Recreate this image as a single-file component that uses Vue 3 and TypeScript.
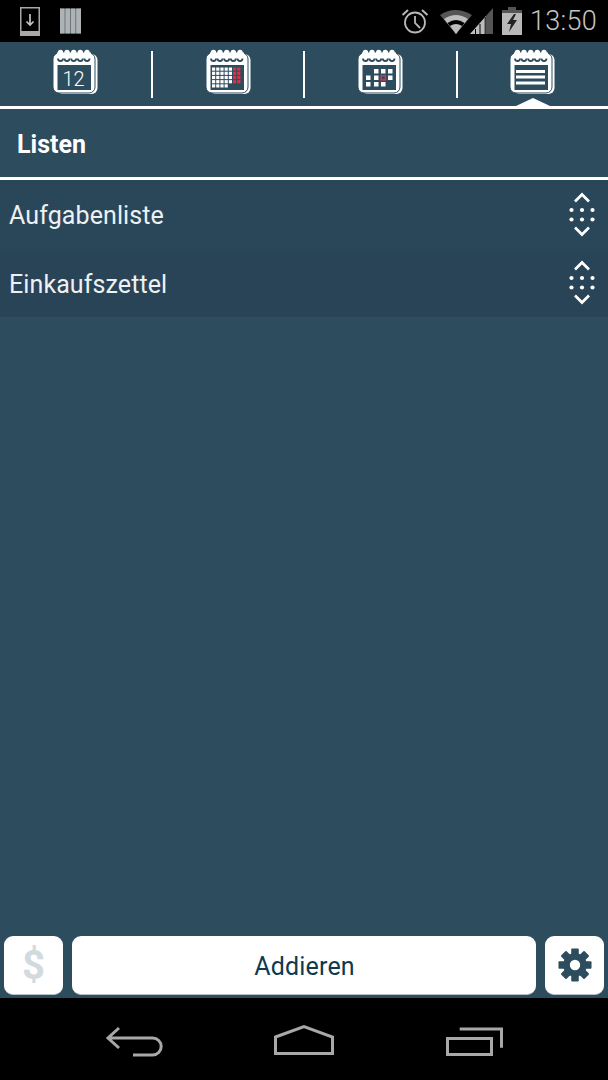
<script setup lang="ts">
// tab icons share the calendar body, only the inner content differs
const tabs = [
  { id: 'day' },
  { id: 'month' },
  { id: 'week' },
  { id: 'list' },
];
const bumps = [7.5, 14, 20.7, 27.3, 34];

// month view grid, last two columns are the red weekend
const monthCells: { x: number; y: number; red: boolean }[] = [];
for (let r = 0; r < 5; r++) {
  for (let c = 0; c < 7; c++) {
    if (r === 4 && c > 3) continue;
    monthCells.push({ x: 6 + c * 4.2, y: 18.5 + r * 4.2, red: c > 4 && r < 4 });
  }
}

// week view squares
const weekCells = [
  [16, 20], [23, 20], [30, 20],
  [8, 26.5], [16, 26.5], [30, 26.5],
  [8, 33], [16, 33], [23, 33],
];

const teeth = [0, 45, 90, 135, 180, 225, 270, 315];

const lists = ['Aufgabenliste', 'Einkaufszettel'];
</script>

<template>
  <div class="screen">
    <header class="status">
      <div class="status-left">
        <svg width="20" height="29" viewBox="0 0 20 29">
          <path d="M.75.75h18.500v27.500H.75z" fill="#000" stroke="#a8a8a8" stroke-width="1.500" />
          <rect x="0" y="24" width="20" height="5" fill="#a8a8a8" />
          <path d="M10 7v11M6.500 14.500l3.500 3.500 3.500-3.500" fill="none" stroke="#c4c4c4" stroke-width="1.700" />
        </svg>
        <svg class="books" width="21" height="26" viewBox="0 0 21 26">
          <rect width="21" height="25" y="0.500" fill="#59666b" />
          <rect x="0" y="0.500" width="4.600" height="25" fill="#aeb4b6" />
          <rect x="5.400" y="0.500" width="4.600" height="25" fill="#aeb4b6" />
          <rect x="10.800" y="0.500" width="4.600" height="25" fill="#aeb4b6" />
          <rect x="16.200" y="0.500" width="4.800" height="25" fill="#aeb4b6" />
        </svg>
      </div>
      <div class="status-right">
        <svg class="alarm" width="28" height="26" viewBox="0 0 28 26">
          <circle cx="14" cy="14.500" r="10" fill="none" stroke="#b8b8b8" stroke-width="1.800" />
          <path d="M14 8v7l5 5" fill="none" stroke="#b8b8b8" stroke-width="1.800" />
          <path d="M1.500 7 7 2M26.500 7 21 2" fill="none" stroke="#b8b8b8" stroke-width="2" />
        </svg>
        <svg class="wifi" width="54" height="27" viewBox="0 0 54 27">
          <path d="M0 7Q15-3 32 7L16 26Z" fill="#555" />
          <path d="M4 11Q16 3 28 11L16 26Z" fill="#bdbdbd" />
          <path d="M7.500 15Q16 9 24.500 15L16 26Z" fill="#000" />
          <path d="M10 18Q16 14 22 18L16 26Z" fill="#bdbdbd" />
          <path d="M53 0V26H30Z" fill="#555" />
          <path d="M46 8V26H30L40 15Z" fill="#bdbdbd" />
          <path d="M35.500 21V26M40 16V26M45.200 9V26" stroke="#000" stroke-width="1" />
        </svg>
        <svg class="battery" width="20" height="28" viewBox="0 0 20 28">
          <rect x="6" y="0" width="8" height="3" fill="#555" />
          <rect x="0" y="3" width="20" height="25" fill="#b8b8b8" />
          <rect x="0" y="3" width="20" height="3" fill="#555" />
          <path d="M12 7 5 17h4l-2 8 8-12h-4l3-6z" fill="#222" />
        </svg>
        <span class="clock">13:50</span>
      </div>
    </header>

    <nav class="tabs">
      <div v-for="(tab, i) in tabs" :key="tab.id" class="tab" :class="{ divided: i < 3 }">
        <svg width="46" height="46" viewBox="0 0 46 46">
          <rect x="3.500" y="5" width="41" height="40" rx="6" fill="#fff" />
          <rect x="0" y="4" width="42" height="40" rx="6" fill="#fff" stroke="#2d4c5e" stroke-width="1" />
          <rect x="4" y="3.500" width="34" height="3" fill="#fff" />
          <circle v-for="b in bumps" :key="b" :cx="b" cy="3.500" r="2.700" fill="#fff" />
          <path
            v-for="b in bumps"
            :key="'u' + b"
            :d="`M${b - 2.5} 9.500a2.500 2.500 0 0 0 5 0`"
            fill="none"
            stroke="#2d4c5e"
            stroke-width="1.800"
          />
          <rect x="4.500" y="16" width="33.500" height="25" fill="#2d4c5e" />
          <text v-if="tab.id === 'day'" x="20.500" y="37" class="day-num">12</text>
          <template v-if="tab.id === 'month'">
            <rect
              v-for="(c, n) in monthCells"
              :key="n"
              :x="c.x"
              :y="c.y"
              width="3.200"
              height="3.200"
              :fill="c.red ? '#d8324a' : '#fff'"
            />
          </template>
          <template v-if="tab.id === 'week'">
            <rect v-for="(c, n) in weekCells" :key="n" :x="c[0]" :y="c[1]" width="4.500" height="4.500" fill="#fff" />
            <rect x="23.200" y="26.700" width="4.200" height="4.200" fill="#2d4c5e" stroke="#e0304a" stroke-width="1.500" />
          </template>
          <template v-if="tab.id === 'list'">
            <rect x="6" y="21" width="29" height="3" fill="#fff" />
            <rect x="6" y="26.500" width="29" height="3" fill="#fff" />
            <rect x="6" y="32.500" width="29" height="3" fill="#fff" />
          </template>
        </svg>
        <span v-if="tab.id === 'list'" class="pointer" />
      </div>
    </nav>

    <h1 class="title">Listen</h1>

    <ul class="rows">
      <li v-for="name in lists" :key="name" class="row">
        <span class="row-name">{{ name }}</span>
        <svg width="26" height="46" viewBox="0 0 26 46">
          <path d="M6 9.500 13 2.500l7 7M6 35.500l7 7 7-7" fill="none" stroke="#fff" stroke-width="2.700" />
          <g fill="#fff">
            <circle cx="2.500" cy="18" r="2.100" />
            <circle cx="13" cy="18" r="2.100" />
            <circle cx="23.500" cy="18" r="2.100" />
            <circle cx="2.500" cy="27.500" r="2.100" />
            <circle cx="13" cy="27.500" r="2.100" />
            <circle cx="23.500" cy="27.500" r="2.100" />
          </g>
        </svg>
      </li>
    </ul>

    <footer class="actions">
      <button class="btn square dollar">$</button>
      <button class="btn add">Addieren</button>
      <button class="btn square">
        <svg width="34" height="34" viewBox="0 0 36 36">
          <rect
            v-for="t in teeth"
            :key="t"
            x="14"
            y="0.500"
            width="8"
            height="8"
            rx="1"
            fill="#2d4c5e"
            :transform="`rotate(${t} 18 18)`"
          />
          <circle cx="18" cy="18" r="9" fill="none" stroke="#2d4c5e" stroke-width="7" />
        </svg>
      </button>
    </footer>

    <div class="navbar">
      <svg width="60" height="34" viewBox="0 0 60 34">
        <path d="M13 4 2 14l11 10M2 14h44.700a8.500 8.500 0 0 1 0 17H27" fill="none" stroke="#a8a8a8" stroke-width="3" />
      </svg>
      <svg class="home" width="60" height="34" viewBox="0 0 60 34">
        <path d="M1.500 13 30 2.500 58.500 13v16.500H1.500z" fill="none" stroke="#a8a8a8" stroke-width="3" />
      </svg>
      <svg class="recents" width="60" height="34" viewBox="0 0 60 34">
        <path d="M3.500 14.500h44v16h-44z" fill="none" stroke="#a8a8a8" stroke-width="3" />
        <path d="M15.700 5h41.800v18.700" fill="none" stroke="#a8a8a8" stroke-width="3" />
      </svg>
    </div>
  </div>
</template>

<style scoped>
.screen {
  width: 608px;
  height: 1080px;
  display: flex;
  flex-direction: column;
  background: #2d4c5e;
  font-family: Roboto, "Liberation Sans", sans-serif;
  overflow: hidden;
}
.status {
  height: 42px;
  flex: none;
  background: #000;
  display: flex;
  align-items: center;
  justify-content: space-between;
  padding: 0 11px 0 20px;
}
.status-left {
  display: flex;
  align-items: center;
  gap: 20px;
}
.status-right {
  display: flex;
  align-items: center;
}
.wifi {
  margin-left: 11px;
}
.battery {
  margin-left: 8px;
}
.clock {
  margin-left: 8px;
  font-size: 27px;
  font-weight: 300;
  color: #c4c4c4;
  letter-spacing: 0.3px;
}
.tabs {
  height: 64px;
  flex: none;
  display: flex;
  border-bottom: 3px solid #fff;
}
.tab {
  position: relative;
  width: 152.5px;
  display: flex;
  justify-content: center;
  padding-top: 7px;
  box-sizing: border-box;
}
.divided::after {
  content: "";
  position: absolute;
  right: 0;
  top: 9px;
  height: 47px;
  width: 2px;
  background: #fff;
}
.tab:last-child {
  flex: 1;
}
.day-num {
  font-size: 20px;
  font-weight: 300;
  fill: #fff;
  text-anchor: middle;
  font-family: Roboto, sans-serif;
}
.pointer {
  position: absolute;
  left: 50%;
  bottom: 0;
  margin-left: -17px;
  border-left: 17px solid transparent;
  border-right: 17px solid transparent;
  border-bottom: 8px solid #fff;
}
.title {
  margin: 0;
  height: 71px;
  flex: none;
  box-sizing: border-box;
  padding: 2px 0 0 17px;
  display: flex;
  align-items: center;
  font-size: 25px;
  font-weight: 700;
  color: #fff;
  border-bottom: 3px solid #fff;
}
.rows {
  margin: 0;
  padding: 0;
  list-style: none;
  flex: 1;
}
.row {
  height: 69px;
  box-sizing: border-box;
  padding: 0 13px 0 9px;
  display: flex;
  align-items: center;
  justify-content: space-between;
  font-size: 25px;
  color: #eef1f3;
  background: #2a4759;
}
.row-name {
  padding-top: 2px;
  letter-spacing: 0.1px;
}
.row + .row {
  background: #294456;
  height: 68px;
}
.actions {
  flex: none;
  display: flex;
  gap: 9px;
  padding: 0 4px 3px;
}
.btn {
  height: 59px;
  border: none;
  border-bottom: 1px solid #b8c2c8;
  border-radius: 9px;
  background: #fff;
  padding: 0;
  display: flex;
  align-items: center;
  justify-content: center;
  font-family: inherit;
  color: #0f3a4e;
  font-size: 25px;
}
.square {
  width: 59px;
  flex: none;
}
.add {
  flex: 1;
  padding: 2px 0 0 1px;
  letter-spacing: 0.2px;
}
.dollar {
  font-size: 40px;
  font-weight: 700;
  color: #d3dade;
}
.navbar {
  height: 82px;
  flex: none;
  background: #000;
  display: flex;
  align-items: flex-start;
  padding: 26px 0 0 106px;
  box-sizing: border-box;
}
.home {
  margin-left: 108px;
}
.recents {
  margin-left: 110px;
}
</style>
